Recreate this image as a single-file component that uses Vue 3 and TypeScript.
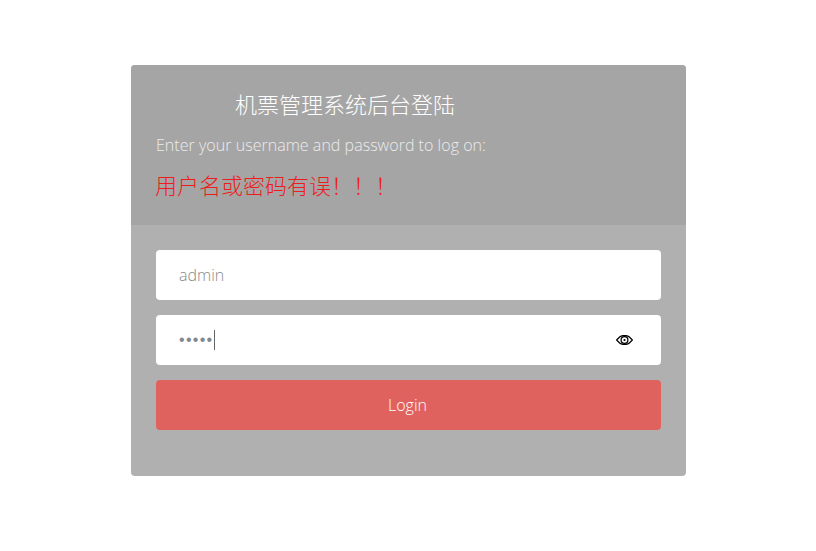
<script setup lang="ts">
const title = '机票管理系统后台登陆'
const subtitle = 'Enter your username and password to log on:'
const errorMessage = '用户名或密码有误！！！'
</script>

<template>
  <main class="page">
    <section class="card">
      <header class="head">
        <h3 class="title">{{ title }}</h3>
        <p class="subtitle">{{ subtitle }}</p>
        <p class="error">{{ errorMessage }}</p>
      </header>
      <form class="form" @submit.prevent>
        <div class="field"><span class="value">admin</span></div>
        <div class="field">
          <span class="dots">•••••</span><span class="caret"></span>
          <svg class="eye" viewBox="0 0 17 10" width="17" height="10" aria-hidden="true">
            <path d="M0.6 5 L3.6 2 C5 0.9 6.6 0.5 8.5 0.5 S12 0.9 13.4 2 L16.4 5 L13.4 8 C12 9.1 10.4 9.5 8.5 9.5 S5 9.1 3.6 8 Z" fill="none" stroke="#000" stroke-width="1.25" />
            <circle cx="8.5" cy="5" r="3.4" fill="none" stroke="#000" stroke-width="1.25" />
            <circle cx="8.5" cy="5" r="1.1" fill="#000" />
          </svg>
        </div>
        <button class="login" type="submit">Login</button>
      </form>
    </section>
  </main>
</template>

<style scoped>
.page {
  display: flex;
  justify-content: flex-start;
  padding: 65px 0 75px 131px;
  font-family: "Open Sans", "Noto Sans CJK SC", sans-serif;
  font-weight: 300;
}
.card {
  width: 555px;
  height: 411px;
  border-radius: 4px;
  overflow: hidden;
  background: #b0b0b0;
}
.head {
  height: 160px;
  box-sizing: border-box;
  padding: 26px 25px 0;
  background: #a5a5a5;
}
.title {
  margin: 0 0 0 79px;
  font-size: 22px;
  line-height: 26px;
  font-weight: 300;
  color: #fff;
}
.subtitle {
  margin: 15px 0 0;
  font-size: 16px;
  line-height: 26px;
  letter-spacing: 0.03px;
  color: #ececec;
  white-space: nowrap;
}
.error {
  margin: 12px 0 0 -1px;
  font-size: 22px;
  line-height: 30px;
  color: #ee1c1c;
}
.form {
  display: flex;
  flex-direction: column;
  gap: 15px;
  padding: 25px;
}
.field {
  display: flex;
  align-items: center;
  height: 50px;
  box-sizing: border-box;
  padding: 0 28px 0 23px;
  border-radius: 4px;
  background: #fff;
  color: #888;
  font-size: 16px;
}
.dots {
  font-family: "Liberation Sans", sans-serif;
  font-size: 16px;
  font-weight: 400;
  letter-spacing: 1.3px;
  color: #808890;
}
.caret {
  width: 1px;
  height: 20px;
  background: #666;
}
.eye {
  margin-left: auto;
}
.login {
  height: 50px;
  padding: 0 2px 0 0;
  border: 0;
  border-radius: 4px;
  background: #df625e;
  color: #fff;
  font: inherit;
  font-size: 16px;
}
</style>
